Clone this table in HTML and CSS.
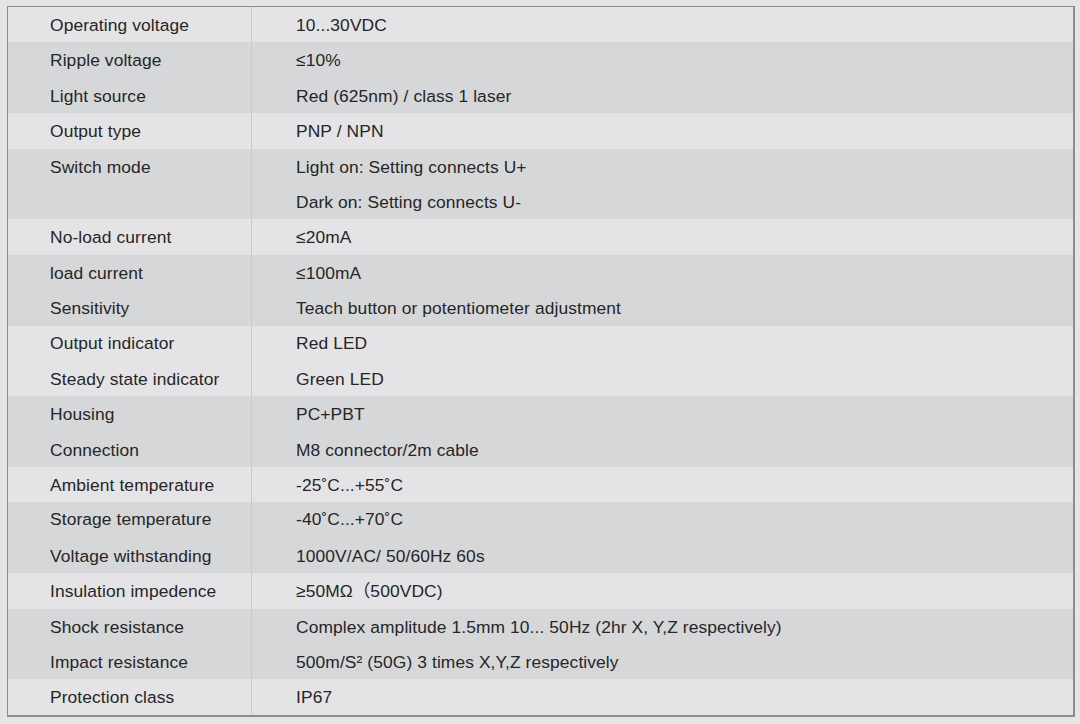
FILE: index.html
```html
<!DOCTYPE html>
<html>
<head>
<meta charset="utf-8">
<link rel="stylesheet" href="styles.css">
</head>
<body>
<div class="sheet">
  <div class="band light"><div class="k"><div class="ln">Operating voltage</div></div><div class="v"><div class="ln">10...30VDC</div></div></div>
  <div class="band dark"><div class="k"><div class="ln">Ripple voltage</div><div class="ln">Light source</div></div><div class="v"><div class="ln">≤10%</div><div class="ln">Red (625nm) / class 1 laser</div></div></div>
  <div class="band light"><div class="k"><div class="ln">Output type</div></div><div class="v"><div class="ln">PNP / NPN</div></div></div>
  <div class="band dark"><div class="k"><div class="ln">Switch mode</div><div class="ln"></div></div><div class="v"><div class="ln">Light on: Setting connects U+</div><div class="ln">Dark on: Setting connects U-</div></div></div>
  <div class="band light"><div class="k"><div class="ln">No-load current</div></div><div class="v"><div class="ln">≤20mA</div></div></div>
  <div class="band dark"><div class="k"><div class="ln">load current</div><div class="ln">Sensitivity</div></div><div class="v"><div class="ln">≤100mA</div><div class="ln">Teach button or potentiometer adjustment</div></div></div>
  <div class="band light tight"><div class="k"><div class="ln">Output indicator</div><div class="ln">Steady state indicator</div></div><div class="v"><div class="ln">Red LED</div><div class="ln">Green LED</div></div></div>
  <div class="band dark"><div class="k"><div class="ln">Housing</div><div class="ln">Connection</div></div><div class="v"><div class="ln">PC+PBT</div><div class="ln">M8 connector/2m cable</div></div></div>
  <div class="band light"><div class="k"><div class="ln">Ambient temperature</div></div><div class="v"><div class="ln">-25˚C...+55˚C</div></div></div>
  <div class="band dark tight"><div class="k"><div class="ln">Storage temperature</div><div class="ln">Voltage withstanding</div></div><div class="v"><div class="ln">-40˚C...+70˚C</div><div class="ln">1000V/AC/ 50/60Hz 60s</div></div></div>
  <div class="band light"><div class="k"><div class="ln">Insulation impedence</div></div><div class="v"><div class="ln">≥50MΩ（500VDC)</div></div></div>
  <div class="band dark"><div class="k"><div class="ln">Shock resistance</div><div class="ln">Impact resistance</div></div><div class="v"><div class="ln">Complex amplitude 1.5mm 10... 50Hz (2hr X, Y,Z respectively)</div><div class="ln">500m/S² (50G) 3 times X,Y,Z respectively</div></div></div>
  <div class="band light"><div class="k"><div class="ln">Protection class</div></div><div class="v"><div class="ln">IP67</div></div></div>
</div>
</body>
</html>
```
FILE: styles.css
```css
html, body {
  margin: 0;
  padding: 0;
  background: #e5e5e7;
}
body {
  padding: 6px 0 0 7px;
  font-family: "Liberation Sans", Arial, "Noto Sans CJK SC", sans-serif;
  font-size: 17.4px;
  letter-spacing: 0.1px;
  color: #262626;
}
.sheet {
  width: 1065px;
  border: 1px solid #8d8d8d;
  border-right-width: 2px;
  border-bottom-width: 2px;
  display: flex;
  flex-direction: column;
}
.band {
  display: flex;
}
.band.light { background: #e4e4e6; }
.band.dark { background: #d6d7d9; }
.k {
  width: 244px;
  border-right: 1px solid #c9cacc;
  padding-left: 42px;
  box-sizing: border-box;
}
.v {
  flex: 1;
  padding-left: 44px;
}
.ln {
  height: 35.4px;
  line-height: 37px;
  white-space: nowrap;
}
.tight .ln:first-child { line-height: 34px; }
.tight .ln:last-child { line-height: 37px; }
```
